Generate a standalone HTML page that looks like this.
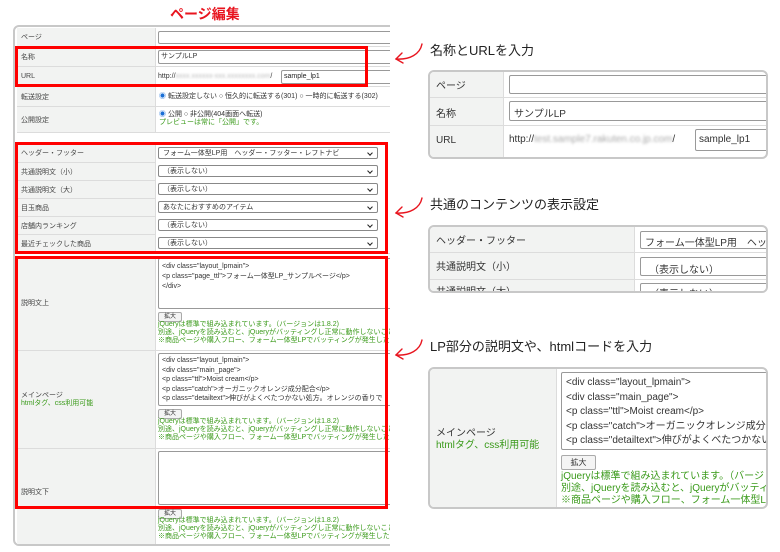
<!DOCTYPE html>
<html><head><meta charset="utf-8"><style>
*{margin:0;padding:0;box-sizing:border-box}
body{width:780px;height:552px;background:#fff;position:relative;overflow:hidden;font-family:"Liberation Sans","Noto Sans CJK JP",sans-serif;color:#333}
.a{position:absolute}
.lb{position:absolute;background:#f2f3f2;border-bottom:1px solid #dcdcdc;font-size:7px;color:#444;padding-left:4px;display:flex;align-items:center}
.vl{position:absolute;background:#fff;border-bottom:1px solid #dcdcdc;border-left:1px solid #dcdcdc}
.in{position:absolute;border:1px solid #999;background:#fff;border-radius:2px}
.t7{font-size:7px;white-space:nowrap;line-height:8px}
.g{color:#3a9a1a}
.sel{position:absolute;border:1px solid #888;border-radius:2px;background:#fff;font-size:7px;padding-left:4px;line-height:11px;height:12px;white-space:nowrap}
.sel:after{content:"";position:absolute;right:5px;top:3px;width:3px;height:3px;border-right:1.2px solid #222;border-bottom:1.2px solid #222;transform:rotate(45deg)}
.red{position:absolute;border:3px solid #f00}
.btn{position:absolute;border:1px solid #aaa;border-radius:2px;background:#f4f4f4;font-size:6px;text-align:center;line-height:8px}
.rp{position:absolute;border:2px solid #c8c8c8;border-radius:6px;overflow:hidden;background:#fff}
.h{position:absolute;font-size:13px;color:#222;white-space:nowrap}
#L{position:absolute;left:0;top:0;width:390px;height:552px;overflow:hidden}
</style></head><body>
<div class="a" style="left:170px;top:4px;font-size:14px;font-weight:bold;color:#e8141e">ページ編集</div>

<div id="L">
<div class="a" style="left:13px;top:25px;width:400px;height:521px;border:2px solid #c8c8c8;border-radius:6px;background:#fff"></div>
<div class="lb" style="left:17px;top:28px;width:138px;height:19px">ページ</div>
<div class="vl" style="left:155px;top:28px;width:240px;height:19px"></div>
<div class="in" style="left:158px;top:31px;width:240px;height:13px"></div>
<div class="lb" style="left:17px;top:47px;width:138px;height:20px">名称</div>
<div class="vl" style="left:155px;top:47px;width:240px;height:20px"></div>
<div class="in t7" style="left:158px;top:50px;width:240px;height:14px;padding:2px 2px">サンプルLP</div>
<div class="lb" style="left:17px;top:67px;width:138px;height:20px">URL</div>
<div class="vl" style="left:155px;top:67px;width:240px;height:20px"></div>
<div class="a t7" style="left:158px;top:73px">http://<span style="color:#bbb;filter:blur(1px)">xxxx.xxxxxx-xxx.xxxxxxxx.com</span>/</div>
<div class="in t7" style="left:281px;top:70px;width:120px;height:14px;padding:2px 2px;color:#222">sample_lp1</div>
<div class="lb" style="left:17px;top:87px;width:138px;height:20px">転送設定</div>
<div class="vl" style="left:155px;top:87px;width:240px;height:20px"></div>
<div class="a t7" style="left:159px;top:93px"><span style="color:#1a6fd6">◉</span> 転送設定しない ○ 恒久的に転送する(301) ○ 一時的に転送する(302)</div>
<div class="lb" style="left:17px;top:107px;width:138px;height:26px">公開設定</div>
<div class="vl" style="left:155px;top:107px;width:240px;height:26px"></div>
<div class="a t7" style="left:159px;top:111px"><span style="color:#1a6fd6">◉</span> 公開 ○ 非公開(404画面へ転送)<br><span class="g">プレビューは常に「公開」です。</span></div>

<div class="lb" style="left:17px;top:144px;width:138px;height:19px">ヘッダー・フッター</div>
<div class="lb" style="left:17px;top:163px;width:138px;height:18px">共通説明文（小）</div>
<div class="lb" style="left:17px;top:181px;width:138px;height:18px">共通説明文（大）</div>
<div class="lb" style="left:17px;top:199px;width:138px;height:18px">目玉商品</div>
<div class="lb" style="left:17px;top:217px;width:138px;height:18px">店舗内ランキング</div>
<div class="lb" style="left:17px;top:235px;width:138px;height:19px">最近チェックした商品</div>
<div class="vl" style="left:155px;top:144px;width:240px;height:110px"></div>
<div class="sel" style="left:158px;top:147px;width:220px">フォーム一体型LP用　ヘッダー・フッター・レフトナビ</div>
<div class="sel" style="left:158px;top:165px;width:220px">（表示しない）</div>
<div class="sel" style="left:158px;top:183px;width:220px">（表示しない）</div>
<div class="sel" style="left:158px;top:201px;width:220px">あなたにおすすめのアイテム</div>
<div class="sel" style="left:158px;top:219px;width:220px">（表示しない）</div>
<div class="sel" style="left:158px;top:237px;width:220px">（表示しない）</div>

<div class="lb" style="left:17px;top:256px;width:138px;height:95px">説明文上</div>
<div class="vl" style="left:155px;top:256px;width:240px;height:95px"></div>
<div class="in t7" style="left:158px;top:258px;width:240px;height:51px;padding:3px 3px;line-height:10px">&lt;div class="layout_lpmain"&gt;<br>&lt;p class="page_ttl"&gt;フォーム一体型LP_サンプルページ&lt;/p&gt;<br>&lt;/div&gt;</div>
<div class="btn" style="left:158px;top:312px;width:24px;height:10px">拡大</div>
<div class="a t7 g" style="left:158px;top:321px">jQueryは標準で組み込まれています。（バージョンは1.8.2)<br>別途、jQueryを読み込むと、jQueryがバッティングし正常に動作しないことがあります<br>※商品ページや購入フロー、フォーム一体型LPでバッティングが発生した場合</div>

<div class="lb" style="left:17px;top:351px;width:138px;height:98px;line-height:8px"><div>メインページ<br><span class="g">htmlタグ、css利用可能</span></div></div>
<div class="vl" style="left:155px;top:351px;width:240px;height:98px"></div>
<div class="in t7" style="left:158px;top:353px;width:240px;height:53px;padding:2px 3px;line-height:9.5px">&lt;div class="layout_lpmain"&gt;<br>&lt;div class="main_page"&gt;<br>&lt;p class="ttl"&gt;Moist cream&lt;/p&gt;<br>&lt;p class="catch"&gt;オーガニックオレンジ成分配合&lt;/p&gt;<br>&lt;p class="detailtext"&gt;伸びがよくべたつかない処方。オレンジの香りで</div>
<div class="btn" style="left:158px;top:409px;width:24px;height:10px">拡大</div>
<div class="a t7 g" style="left:158px;top:418px">jQueryは標準で組み込まれています。（バージョンは1.8.2)<br>別途、jQueryを読み込むと、jQueryがバッティングし正常に動作しないことがあります<br>※商品ページや購入フロー、フォーム一体型LPでバッティングが発生した場合</div>

<div class="lb" style="left:17px;top:449px;width:138px;height:95px;border-bottom:none;align-items:flex-end;padding-bottom:47px">説明文下</div>
<div class="vl" style="left:155px;top:449px;width:240px;height:95px;border-bottom:none"></div>
<div class="in" style="left:158px;top:451px;width:240px;height:54px"></div>
<div class="btn" style="left:158px;top:509px;width:24px;height:10px">拡大</div>
<div class="a t7 g" style="left:158px;top:517px">jQueryは標準で組み込まれています。（バージョンは1.8.2)<br>別途、jQueryを読み込むと、jQueryがバッティングし正常に動作しないことがあります<br>※商品ページや購入フロー、フォーム一体型LPでバッティングが発生した場合</div>

<div class="red" style="left:15px;top:46px;width:353px;height:41px"></div>
<div class="red" style="left:15px;top:142px;width:373px;height:112px"></div>
<div class="red" style="left:15px;top:256px;width:373px;height:253px"></div>
</div>

<svg class="a" style="left:392px;top:40px" width="32" height="26"><g fill="none" stroke="#e8141e" stroke-width="1.4" stroke-linecap="round"><path d="M30 4 C28 14 18 20 4 19"/><path d="M10 13 L4 19 L11 23"/></g></svg>
<svg class="a" style="left:392px;top:194px" width="32" height="26"><g fill="none" stroke="#e8141e" stroke-width="1.4" stroke-linecap="round"><path d="M30 4 C28 14 18 20 4 19"/><path d="M10 13 L4 19 L11 23"/></g></svg>
<svg class="a" style="left:392px;top:336px" width="32" height="26"><g fill="none" stroke="#e8141e" stroke-width="1.4" stroke-linecap="round"><path d="M30 4 C28 14 18 20 4 19"/><path d="M10 13 L4 19 L11 23"/></g></svg>

<div class="h" style="left:430px;top:40px">名称とURLを入力</div>
<div class="h" style="left:430px;top:194px">共通のコンテンツの表示設定</div>
<div class="h" style="left:430px;top:336px">LP部分の説明文や、htmlコードを入力</div>

<div class="rp" style="left:428px;top:70px;width:340px;height:89px;font-size:10px">
 <div class="a" style="left:0;top:0;width:74px;height:100%;background:#f2f3f2;border-right:1px solid #dcdcdc"></div>
 <div class="a" style="left:0;top:25px;width:100%;border-top:1px solid #dcdcdc"></div>
 <div class="a" style="left:0;top:53px;width:100%;border-top:1px solid #dcdcdc"></div>
 <div class="a" style="left:6px;top:5px">ページ</div>
 <div class="a" style="left:6px;top:33px">名称</div>
 <div class="a" style="left:6px;top:63px">URL</div>
 <div class="in" style="left:79px;top:3px;width:270px;height:19px"></div>
 <div class="in" style="left:79px;top:29px;width:270px;height:20px;padding:3px 4px">サンプルLP</div>
 <div class="a" style="left:79px;top:62px;white-space:nowrap">http://<span style="color:#aaa;filter:blur(1.2px)">test.sample7.rakuten.co.jp.com</span>/</div>
 <div class="in" style="left:265px;top:57px;width:80px;height:22px;padding:4px 3px">sample_lp1</div>
</div>
<div class="rp" style="left:428px;top:225px;width:340px;height:68px;font-size:10px">
 <div class="a" style="left:0;top:0;width:205px;height:100%;background:#f2f3f2;border-right:1px solid #dcdcdc"></div>
 <div class="a" style="left:0;top:25px;width:100%;border-top:1px solid #dcdcdc"></div>
 <div class="a" style="left:0;top:52px;width:100%;border-top:1px solid #dcdcdc"></div>
 <div class="a" style="left:6px;top:5px">ヘッダー・フッター</div>
 <div class="a" style="left:6px;top:31px">共通説明文（小）</div>
 <div class="a" style="left:6px;top:56px">共通説明文（大）</div>
 <div class="in" style="left:210px;top:4px;width:140px;height:18px;padding:2px 4px;white-space:nowrap">フォーム一体型LP用　ヘッダー</div>
 <div class="in" style="left:210px;top:30px;width:140px;height:19px;padding:3px 8px">（表示しない）</div>
 <div class="in" style="left:210px;top:56px;width:140px;height:19px;padding:1px 8px">（表示しない）</div>
</div>
<div class="rp" style="left:428px;top:367px;width:340px;height:142px;font-size:10px">
 <div class="a" style="left:0;top:0;width:127px;height:100%;background:#f2f3f2;border-right:1px solid #dcdcdc"></div>
 <div class="a" style="left:6px;top:59px;line-height:12px">メインページ<br><span class="g">htmlタグ、css利用可能</span></div>
 <div class="in" style="left:131px;top:3px;width:220px;height:78px;padding:3px 4px;line-height:14.5px;white-space:nowrap">&lt;div class="layout_lpmain"&gt;<br>&lt;div class="main_page"&gt;<br>&lt;p class="ttl"&gt;Moist cream&lt;/p&gt;<br>&lt;p class="catch"&gt;オーガニックオレンジ成分配合<br>&lt;p class="detailtext"&gt;伸びがよくべたつかない</div>
 <div class="btn" style="left:131px;top:86px;width:35px;height:15px;font-size:8px;line-height:13px">拡大</div>
 <div class="a g" style="left:131px;top:102px;line-height:12px;white-space:nowrap">jQueryは標準で組み込まれています。（バージョンは<br>別途、jQueryを読み込むと、jQueryがバッティング<br>※商品ページや購入フロー、フォーム一体型LP</div>
</div>
</body></html>
